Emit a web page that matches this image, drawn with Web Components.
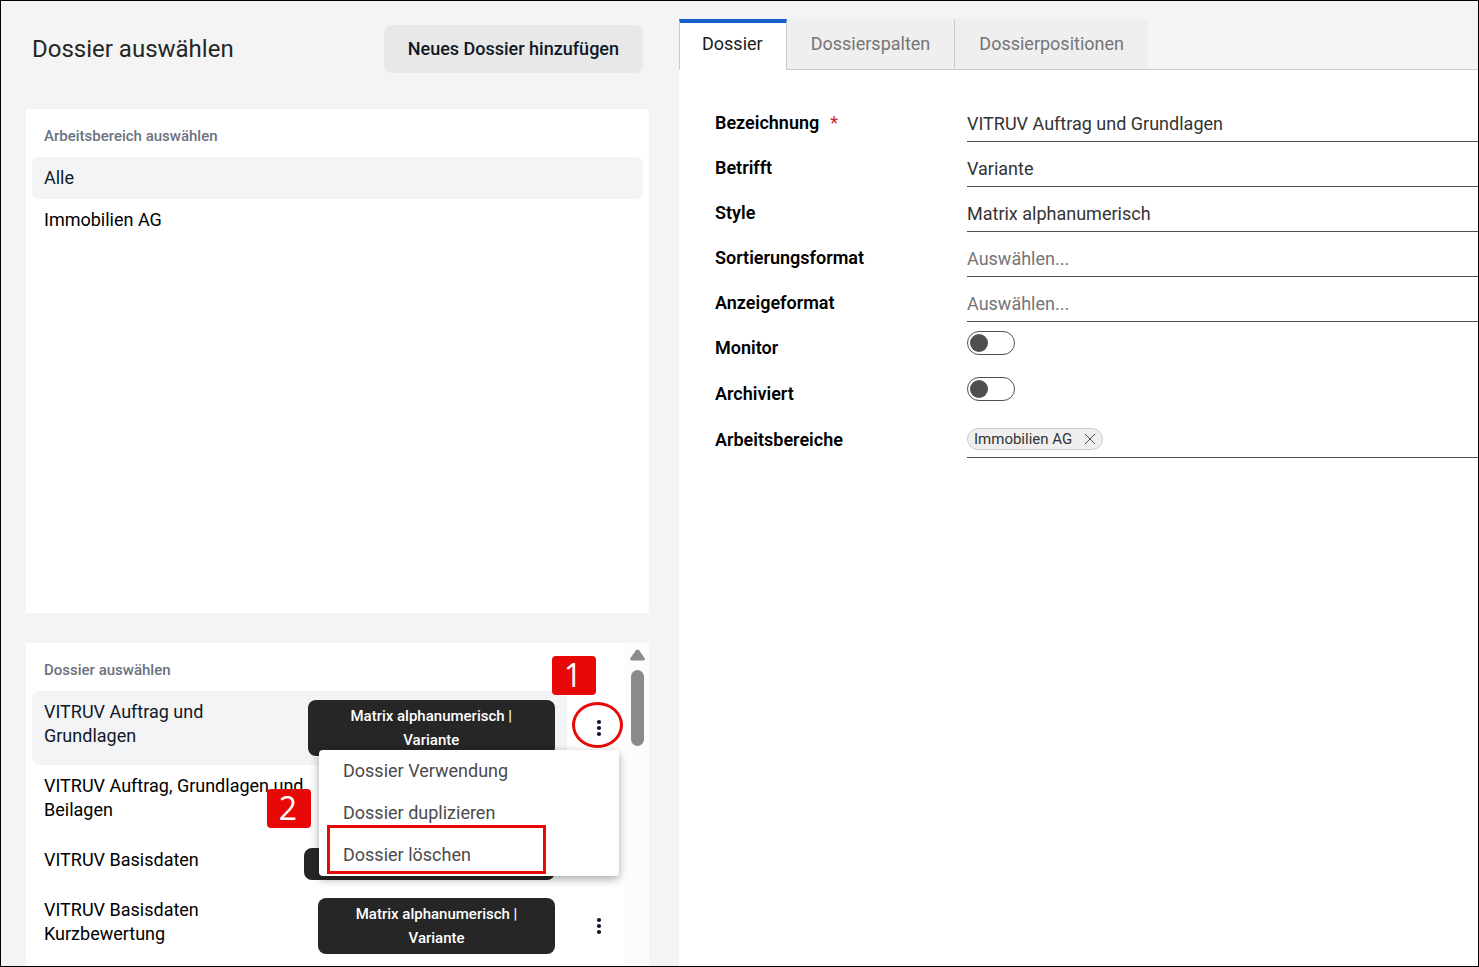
<!DOCTYPE html>
<html lang="de">
<head>
<meta charset="utf-8">
<title>Dossier auswählen</title>
<style>
  body { margin: 0; font-family: Roboto, "Liberation Sans", sans-serif; font-size: 18px; line-height: 24px; color: #000; }
</style>
</head>
<body>
<dossier-app></dossier-app>

<script>
const define = (name, html, setup) => {
  const template = document.createElement('template');
  template.innerHTML = html;
  customElements.define(name, class extends HTMLElement {
    constructor() {
      super();
      this.attachShadow({ mode: 'open' }).append(template.content.cloneNode(true));
    }
    connectedCallback() {
      if (setup && !this.ready) { this.ready = true; setup(this, this.shadowRoot); }
    }
  });
};

/* Numbered red marker */
define('step-badge', `
  <style>
    :host { display: grid; place-items: start center; box-sizing: border-box; width: 44px; height: 39px; padding-right: 2px; border-radius: 4px;
      background: #e80808; color: #fff; font: 32px/38px "Open Sans", "Noto Sans", sans-serif; }
  </style>
  <span><slot></slot></span>`);

/* Page title with its main action */
define('page-header', `
  <style>
    :host { display: flex; align-items: center; justify-content: space-between; height: 48px; padding: 24px 6px 36px; }
    h1 { margin: 0; font-size: 24px; line-height: 32px; font-weight: 400; color: #262626; }
    button { height: 48px; padding: 0 24px; border: 0; border-radius: 8px; background: #e8e8e8;
      color: #111827; font: 500 18px/24px Roboto, sans-serif; }
  </style>
  <h1><slot></slot></h1>
  <button type="button"><slot name="action"></slot></button>`);

/* White panel with a caption and an optional scroll bar */
define('list-panel', `
  <style>
    :host { display: flex; min-height: 0; background: #fff; }
    .body { flex: 1; min-width: 0; padding: 6px; }
    :host([scroll]) .body { padding-right: 0; }
    h2 { margin: 0; padding: 0 12px; font-size: 15px; line-height: 42px; font-weight: 500; color: #6b7280; }
    .bar { display: none; width: 24px; flex: none; background: #fcfcfc; }
    :host([scroll]) .bar { display: flex; flex-direction: column; align-items: center; gap: 9px; padding-top: 6px; }
    .bar svg { display: block; width: 15px; height: 12px; }
    .thumb { width: 13px; height: 76px; border-radius: 7px; background: #8b8b8b; }
  </style>
  <div class="body"><h2></h2><slot></slot></div>
  <div class="bar" aria-hidden="true">
    <svg viewBox="0 0 15 12"><path d="M6 1.2q1.5-1.6 3 0l5.400 7.600q1 2.600-1.200 2.600H1.800q-2.200 0-1.200-2.600z" fill="#8b8b8b"/></svg>
    <div class="thumb"></div>
  </div>`, (el, root) => { root.querySelector('h2').textContent = el.getAttribute('caption'); });

/* Selectable line in the workspace list */
define('list-item', `
  <style>
    :host { display: block; }
    button { display: block; width: 100%; height: 42px; padding: 0 12px; border: 0; border-radius: 6px;
      background: none; text-align: left; color: #000; font: 400 18px/24px Roboto, sans-serif; }
    :host([selected]) button { background: #f3f4f6; color: #111827; }
  </style>
  <button type="button"><slot></slot></button>`);

/* Dossier with its type label and an overflow button; a row covered by the open menu hides its label text */
define('dossier-row', `
  <style>
    :host { display: flex; gap: 6px; position: relative; }
    .main { flex: 1; min-width: 0; display: flex; align-items: flex-start; justify-content: space-between; gap: 12px;
      padding: 9px 12px; border: 0; border-radius: 8px 0 0 8px; background: none; text-align: left;
      color: #000; font: 400 18px/24px Roboto, sans-serif; }
    :host([selected]) .main { background: #f3f4f6; color: #111827; }
    .type { padding: 4px 15px; border-radius: 8px; background: #262626; color: #fff; text-align: center;
      font-size: 15px; font-weight: 500; }
    :host([covered]) .type span { visibility: hidden; }
    .more { display: grid; place-items: center; width: 52px; padding: 0; border: 0; background: none; color: #111827; }
    svg { display: block; width: 6px; height: 18px; }
  </style>
  <button class="main" type="button"><span><slot></slot></span><span class="type"><span class="text"></span></span></button>
  <button class="more" type="button" aria-label="Weitere Aktionen">
    <svg viewBox="0 0 6 18" fill="currentColor"><circle cx="3" cy="3" r="2.100"/><circle cx="3" cy="9" r="2.100"/><circle cx="3" cy="15" r="2.100"/></svg>
  </button>
  <slot name="overlay"></slot>`, (el, root) => { root.querySelector('.text').textContent = el.getAttribute('type'); });

/* Overflow menu opened from the first dossier */
define('context-menu', `
  <style>
    :host { display: block; position: absolute; z-index: 2; top: 59px; right: 6px; width: 300px; border-radius: 4px;
      background: #fff; box-shadow: 0 3px 10px rgba(0,0,0,.35); }
    button { display: block; width: 100%; height: 42px; padding: 0 24px; border: 0; background: none;
      text-align: left; color: #4b4b4b; font: 400 18px/24px Roboto, sans-serif; }
    .frame { position: absolute; left: 8px; top: 75px; width: 219px; height: 49px; box-sizing: border-box;
      border: 3px solid #e80808; pointer-events: none; }
    step-badge { position: absolute; left: -52px; top: 39px; }
  </style>
  <button type="button">Dossier Verwendung</button>
  <button type="button">Dossier duplizieren</button>
  <button type="button">Dossier löschen</button>
  <div class="frame"></div>
  <step-badge>2</step-badge>`);

/* Marker and ring around the overflow button */
define('more-callout', `
  <style>
    :host { position: absolute; z-index: 1; top: -35px; right: 2px; width: 71px; height: 92px; pointer-events: none; }
    .ring { position: absolute; right: 0; bottom: 0; width: 51px; height: 46px; box-sizing: border-box;
      border: 3px solid #e80808; border-radius: 50%; }
  </style>
  <step-badge>1</step-badge><div class="ring"></div>`);

/* Tab strip */
define('tab-bar', `
  <style>
    :host { display: flex; height: 51px; }
    button { box-sizing: border-box; padding: 0 24px; border: 0; border-right: 1px solid #ccc; border-bottom: 1px solid #ccc;
      background: #efefef; color: #757575; font: 400 18px/24px Roboto, sans-serif; }
    button[aria-selected=true] { padding: 0 23px 5px 22px; border-top: 4px solid #1560c8; border-left: 1px solid #ccc; border-bottom: 0;
      background: #fff; color: #212121; }
    button:last-of-type { border-right: 0; }
    .rest { flex: 1; border-bottom: 1px solid #ccc; }
  </style>
  <button type="button" aria-selected="true">Dossier</button>
  <button type="button">Dossierspalten</button>
  <button type="button">Dossierpositionen</button>
  <div class="rest"></div>`);

/* Labelled form line; kind is text, select, toggle or tags */
define('form-row', `
  <style>
    :host { display: grid; grid-template-columns: 252px minmax(0, 1fr); height: 45px; }
    :host([kind=toggle]) { height: 46px; }
    :host([kind=tags]) { height: 44px; }
    label { padding-top: 14px; font-weight: 600; color: #000; }
    label i { margin-left: 11px; font-style: normal; font-weight: 400; color: #c62828; }
    input, select { box-sizing: border-box; font: 400 18px/24px Roboto, sans-serif; }
    .line { width: 100%; height: 45px; margin: 0; padding: 9px 0 0; border: 0; border-bottom: 1px solid #4f4f4f;
      border-radius: 0; background: none; color: #333; appearance: none; outline: 0; }
    .empty { color: #757575; }
    .toggle { width: 48px; height: 24px; margin: 9px 0 0; border: 1px solid #4f4f4f; border-radius: 12px; background: #fff; appearance: none;
      display: flex; align-items: center; padding: 0 2px; }
    .toggle::before { content: ""; width: 18px; height: 18px; border-radius: 50%; background: #4f4f4f; }
    .tags { display: flex; align-items: flex-start; padding-top: 14px; border-bottom: 1px solid #4f4f4f; }
    .tags input { flex: 1; min-width: 0; height: 24px; padding: 0 8px; border: 0; background: none; outline: 0; }
    .chip { display: flex; align-items: center; box-sizing: border-box; height: 22px; padding: 0 6px; gap: 12px; border: 1px solid #ccc;
      border-radius: 11px; background: #efefef; color: #333; font-size: 15px; line-height: 20px; }
    .chip button { display: block; padding: 0; border: 0; background: none; color: #4f4f4f; }
    .chip svg { display: block; width: 12px; height: 12px; }
  </style>
  <label for="field"></label>`, (el, root) => {
    const kind = el.getAttribute('kind'), value = el.getAttribute('value') || '';
    const label = root.querySelector('label');
    label.textContent = el.getAttribute('label');
    if (el.hasAttribute('required')) label.insertAdjacentHTML('beforeend', '<i>*</i>');
    const field = {
      text: `<input id="field" class="line" type="text" value="${value}">`,
      select: `<select id="field" class="line${value ? '' : ' empty'}"><option>${value || 'Auswählen...'}</option></select>`,
      toggle: `<input id="field" class="toggle" type="checkbox" role="switch">`,
      tags: `<div class="tags"><span class="chip">${value}<button type="button" aria-label="Entfernen">
        <svg viewBox="0 0 12 12" fill="none" stroke="currentColor"><path d="M1 1l10 10M11 1L1 11"/></svg>
        </button></span><input id="field" type="text"></div>`
    }[kind];
    root.append(document.createRange().createContextualFragment(field));
  });

define('dossier-app', `
  <style>
    :host { display: grid; grid-template-columns: minmax(0, 623fr) minmax(0, 799fr); gap: 30px; box-sizing: border-box; height: 100vh;
      padding-left: 25px; border: 1px solid #000; background: #f4f4f4; overflow: hidden; }
    aside { display: flex; flex-direction: column; min-height: 0; }
    .spaces { flex: 504 0 0; margin-bottom: 30px; }
    .dossiers { flex: 323 0 0; }
    main { display: flex; flex-direction: column; padding-top: 18px; }
    form { flex: 1; padding: 27px 0 0 36px; background: #fff; }
  </style>
  <aside>
    <page-header>Dossier auswählen<span slot="action">Neues Dossier hinzufügen</span></page-header>
    <list-panel class="spaces" caption="Arbeitsbereich auswählen">
      <list-item selected>Alle</list-item>
      <list-item>Immobilien AG</list-item>
    </list-panel>
    <list-panel class="dossiers" caption="Dossier auswählen" scroll>
      <dossier-row selected type="Matrix alphanumerisch | Variante">VITRUV Auftrag und Grundlagen<more-callout slot="overlay"></more-callout><context-menu slot="overlay"></context-menu></dossier-row>
      <dossier-row covered type="Matrix alphanumerisch | Variante">VITRUV Auftrag, Grundlagen und Beilagen</dossier-row>
      <dossier-row covered type="Matrix alphanumerisch | Variante">VITRUV Basisdaten</dossier-row>
      <dossier-row type="Matrix alphanumerisch | Variante">VITRUV Basisdaten Kurzbewertung</dossier-row>
    </list-panel>
  </aside>
  <main>
    <tab-bar></tab-bar>
    <form>
      <form-row kind="text" label="Bezeichnung" value="VITRUV Auftrag und Grundlagen" required></form-row>
      <form-row kind="select" label="Betrifft" value="Variante"></form-row>
      <form-row kind="select" label="Style" value="Matrix alphanumerisch"></form-row>
      <form-row kind="select" label="Sortierungsformat"></form-row>
      <form-row kind="select" label="Anzeigeformat"></form-row>
      <form-row kind="toggle" label="Monitor"></form-row>
      <form-row kind="toggle" label="Archiviert"></form-row>
      <form-row kind="tags" label="Arbeitsbereiche" value="Immobilien AG"></form-row>
    </form>
  </main>`);
</script>
</body>
</html>
